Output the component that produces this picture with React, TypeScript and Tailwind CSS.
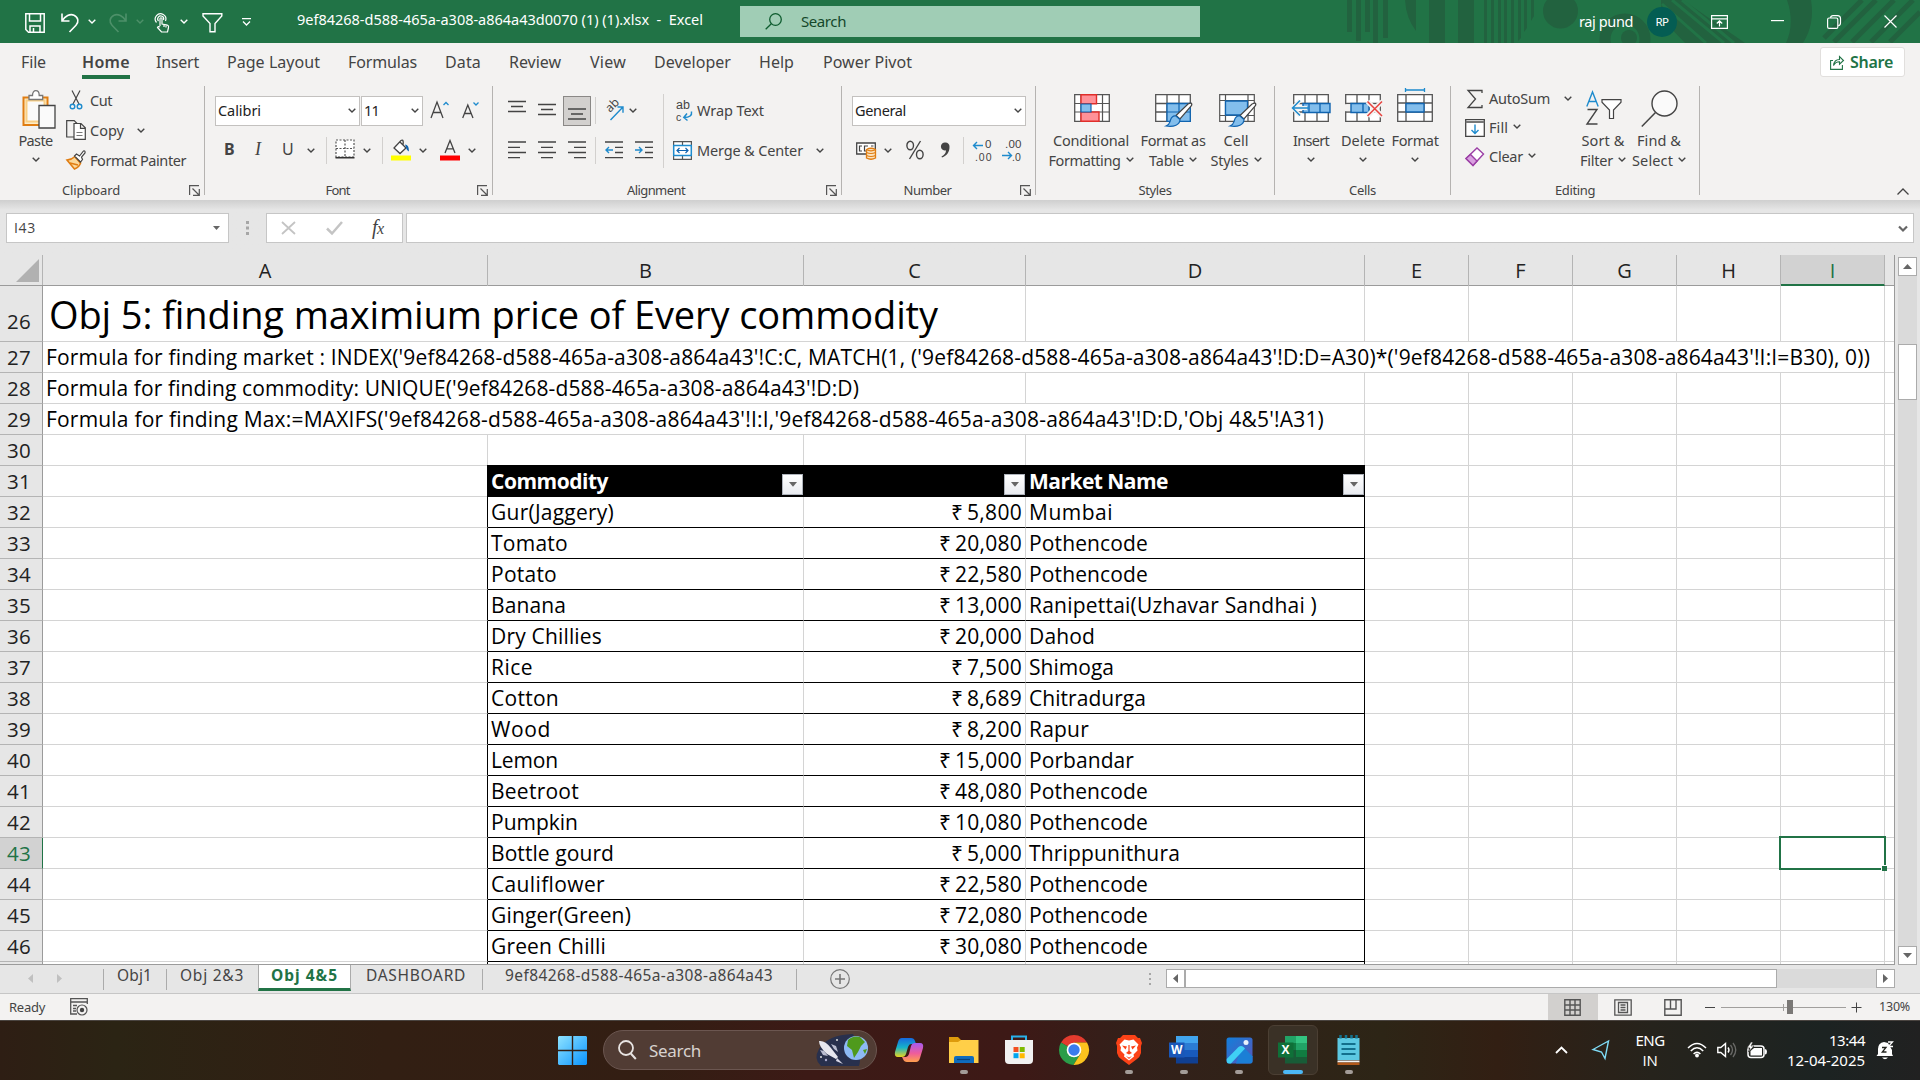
import React, { useLayoutEffect, useRef } from "react";

type Kids = { children?: React.ReactNode };

/** Single-line text whose tracking is adjusted so that it fills a given width. */
function T({ w, className = "", children }: { w: number; className?: string; children: string }) {
  const ref = useRef<HTMLSpanElement>(null);
  useLayoutEffect(() => {
    const el = ref.current;
    if (!el) return;
    el.style.letterSpacing = "0px";
    const natural = el.getBoundingClientRect().width;
    el.style.letterSpacing = `${(w - natural) / children.length}px`;
  }, [w, children]);
  return (
    <span className={`block shrink-0 whitespace-pre ${className}`} style={{ width: w }}>
      <span ref={ref} className="inline-block">
        {children}
      </span>
    </span>
  );
}

function Svg({ w, h, className = "", children }: { w: number; h: number; className?: string } & Kids) {
  return (
    <svg width={w} height={h} viewBox={`0 0 ${w} ${h}`} fill="none" className={`block shrink-0 overflow-visible ${className}`}>
      {children}
    </svg>
  );
}

const Chev = ({ className = "", color = "#444" }: { className?: string; color?: string }) => (
  <Svg w={8} h={5} className={className}>
    <path d="M0.7 0.7L4 4L7.3 0.7" stroke={color} strokeWidth="1.4" />
  </Svg>
);

const VSep = ({ className = "" }: { className?: string }) => (
  <span className={`block h-[27px] w-px shrink-0 bg-[#d2d0ce] ${className}`} />
);

/* ---------- Title bar ---------- */

function TitlePattern() {
  return (
    <svg className="absolute inset-y-0 left-[1340px]" width="580" height="43" viewBox="1340 0 580 43" fill="#22623f">
      <path d="M1347 0h5v32h-5zM1356 0h5v41h-5zM1365 0h5v32h-5zM1373 0h5v43h-5zM1383 0h5v38h-5zM1405 0h11v31Q1406 18 1405 0zM1429 0h16v43h-16zM1458 0h16v43h-16z" />
      <path d="M1484 0h3v43h-3zM1491 0h3v43h-3zM1498 0h3v43h-3zM1504 0h3v43h-3zM1511 0h3v43h-3zM1518 0h3v38l-3 3zM1524 0h3v28l-3 4zM1531 0h3v16l-3 5z" />
      <circle cx="1560.500" cy="11" r="17.500" />
      <circle cx="1625" cy="39" r="20" stroke="#22623f" strokeWidth="11" fill="none" />
      <circle cx="1629" cy="38" r="8" />
      <path d="M1661 0h22l62 43h-60L1661 18z" />
      <path d="M1672 0l52 43M1682 0l52 43M1662 4l44 39" stroke="#217346" strokeWidth="3" />
      <path d="M1787 0h24q4 24-8 43h-17q9-20 1-43z" />
      <path d="M1824 38l38-38M1834 42l42-42M1852 42l42-42M1871 42l42-42M1890 42l30-30" stroke="#22623f" strokeWidth="5" />
    </svg>
  );
}

function TitleBar() {
  return (
    <div className="relative flex h-[43px] items-center bg-[#217346] text-white">
      <TitlePattern />
      <Svg w={20} h={20} className="ml-[25px] mt-[3px]">
        <path d="M0.8 0.8h18.400v18.400H3.500L0.800 16.500zM4.500 1v7h11V1M5 19v-6h10v6M8.500 19v-4" stroke="#fff" strokeWidth="1.5" />
      </Svg>
      <Svg w={18} h={20} className="ml-4 mt-[3px]">
        <path d="M1 0.500v7.500h7.500M1.300 7.700C4 3 9 .5 13 2.200c4.500 2 5 7 2 10L8.500 19" stroke="#fff" strokeWidth="1.600" />
      </Svg>
      <Chev color="#fff" className="ml-[9px]" />
      <Svg w={18} h={20} className="ml-[13px] mt-[3px]">
        <path d="M17 0.500v7.500H9.500M16.700 7.700C14 3 9 .5 5 2.200c-4.500 2-5 7-2 10L9.500 19" stroke="#4d9069" strokeWidth="1.600" />
      </Svg>
      <Chev color="#4d9069" className="ml-[9px]" />
      <Svg w={16} h={20} className="ml-[10px] mt-[3px]">
        <path d="M2.500 9.500A5.300 5.300 0 1 1 11.500 8M4.500 8A3 3 0 1 1 9.500 7M6 13V5.500q1-1.500 2 0V11l5.500 1.200q1.500.5 1 2.300L13.500 19H7.500L3.500 14.500q.5-1.500 2.500-.5M10 11.500v2.500M12 12v2.500" stroke="#fff" strokeWidth="1.200" />
      </Svg>
      <Chev color="#fff" className="ml-[10px]" />
      <Svg w={21} h={20} className="ml-[14px] mt-[3px]">
        <path d="M1 0.800h18.800v2.200L13 10.500v8.300H8v-8.300L1 3z" stroke="#fff" strokeWidth="1.400" />
      </Svg>
      <Svg w={9} h={8} className="ml-[19px]">
        <path d="M0 .700h9M1 3.500L4.500 7L8 3.500" stroke="#fff" strokeWidth="1.300" />
      </Svg>
      <T w={406} className="ml-[46px] mt-[-4px] text-[14.500px]">
        9ef84268-d588-465a-a308-a864a43d0070 (1) (1).xlsx  -  Excel
      </T>
      <div className="ml-[37px] flex h-[31px] w-[460px] shrink-0 items-center bg-[#a0cdb5] text-[#14482a]">
        <Svg w={17} h={17} className="ml-[25px]">
          <circle cx="10.500" cy="6.500" r="5.800" stroke="#0e5c2f" strokeWidth="1.300" />
          <path d="M6.300 10.700L.7 16.300" stroke="#0e5c2f" strokeWidth="1.300" />
        </Svg>
        <T w={45} className="ml-[19px] text-[15px]">Search</T>
      </div>
      <T w={54} className="relative ml-[379px] text-[14.500px]">raj pund</T>
      <div className="relative ml-[14px] flex h-[30px] w-[30px] shrink-0 items-center justify-center rounded-full bg-[#045d53]">
        <T w={13} className="text-[11.500px]">RP</T>
      </div>
      <Svg w={17} h={14} className="relative ml-[34px]">
        <path d="M.6.600h15.800v12.800H.6zM.6 3.800h15.800M8.500 11.500V6M5.800 8.500L8.500 5.800L11.200 8.500" stroke="#fff" strokeWidth="1.200" />
      </Svg>
      <Svg w={13} h={2} className="relative ml-[43px] mt-[-1px]">
        <path d="M0 .6h13" stroke="#fff" strokeWidth="1.200" />
      </Svg>
      <Svg w={14} h={14} className="relative ml-[43px]">
        <path d="M3.500 2.800Q3.800.6 6 .6h4.500q3 0 3 3V8q0 2.400-2.300 2.600" stroke="#fff" strokeWidth="1.200" />
        <rect x=".6" y="3" width="10.200" height="10.400" rx="1.500" stroke="#fff" strokeWidth="1.200" />
      </Svg>
      <Svg w={13} h={13} className="relative ml-[43px]">
        <path d="M.5.500l12 12M12.500.500l-12 12" stroke="#fff" strokeWidth="1.200" />
      </Svg>
    </div>
  );
}

/* ---------- Ribbon tabs ---------- */

const TABS: [string, number, string][] = [
  ["File", 25, "ml-[21px]"],
  ["Home", 48, "ml-[36px]"],
  ["Insert", 43, "ml-[26px]"],
  ["Page Layout", 93, "ml-[28px]"],
  ["Formulas", 69, "ml-[28px]"],
  ["Data", 36, "ml-[28px]"],
  ["Review", 52, "ml-[28px]"],
  ["View", 36, "ml-[29px]"],
  ["Developer", 77, "ml-[28px]"],
  ["Help", 35, "ml-[28px]"],
  ["Power Pivot", 89, "ml-[29px]"],
];

function TabRow() {
  return (
    <div className="flex h-[42px] items-start text-[16px] leading-[38px] text-[#444]">
      {TABS.map(([name, w, ml]) => (
        <div key={name} className={`${ml} h-[36px] ${name === "Home" ? "border-b-4 border-[#217346] font-semibold" : ""}`}>
          <T w={w}>{name}</T>
        </div>
      ))}
      <div className="ml-auto mr-[15px] mt-1 flex h-[30px] w-[85px] items-center rounded-[3px] border border-[#e1dfdd] bg-white text-[#217346]">
        <Svg w={14} h={15} className="ml-[9px]">
          <path d="M3 5.500H.6v8.900h11.800V10M3.500 10.500C4 6.500 6 4.500 9.500 4.500V1.500L13.500 5.500L9.500 9.200V6.800C7 6.700 5 8 3.500 10.500z" stroke="#217346" strokeWidth="1.100" />
        </Svg>
        <T w={43} className="ml-[6px] text-[16px] font-semibold leading-none">Share</T>
      </div>
    </div>
  );
}

/* ---------- Ribbon ---------- */

function Group({ label, lw, w, launcher, children }: { label: string; lw: number; w: string; launcher?: boolean } & Kids) {
  return (
    <div className={`${w} flex shrink-0`}>
      <div className="flex flex-1 flex-col">
        <div className="flex h-[95px]">{children}</div>
        <div className="flex h-[20px] items-center">
          <div className="flex flex-1 justify-center text-[13px] leading-none text-[#444]">
            <T w={lw}>{label}</T>
          </div>
          {launcher && (
            <Svg w={11} h={11} className="ml-[7px] mr-1">
              <path d="M.6 10V.6H10M3.500 3.500l6 6M10.300 4v6.300H4" stroke="#555" strokeWidth="1.200" />
            </Svg>
          )}
        </div>
      </div>
      <div className="mt-px h-[109px] w-px bg-[#b5b3b1]" />
    </div>
  );
}

function Combo({ text, tw, w }: { text: string; tw: number; w: string }) {
  return (
    <div className={`${w} flex h-[30px] shrink-0 items-center justify-between border border-[#c3c1bf] bg-white pl-[2px] pr-[3px] text-[14.500px] leading-none text-[#222]`}>
      <T w={tw}>{text}</T>
      <Chev />
    </div>
  );
}

function Lines({ d, className = "", w = 18 }: { d: string; className?: string; w?: number }) {
  return (
    <Svg w={w} h={22} className={className}>
      <path d={d} stroke="#444" strokeWidth="1.300" />
    </Svg>
  );
}

function Big({ w, l1, w1, l2, w2, children }: { w: string; l1: string; w1: number; l2?: string; w2?: number } & Kids) {
  return (
    <div className={`${w} flex shrink-0 flex-col items-center text-[14.500px] leading-5 text-[#444]`}>
      <div className="flex h-[45px] items-start">{children}</div>
      <T w={w1}>{l1}</T>
      <div className="flex h-5 items-center gap-[5px]">
        {l2 && w2 && <T w={w2}>{l2}</T>}
        <Chev className="mt-[-2px]" />
      </div>
    </div>
  );
}

function Brush() {
  return (
    <>
      <path d="M36 10q1.500 1 .2 3L25 26l-4-3.500L33 11z" fill="#fff" stroke="#444" strokeWidth="1.200" />
      <path d="M21 23l4 3.500c0 5-6 8-14 6.500 4-1.500 3.500-3 4.500-6 1-3 3-4.500 5.500-4z" fill="#83beec" stroke="#1064b0" strokeWidth="1.200" />
    </>
  );
}

function Ribbon() {
  return (
    <div className="flex h-[115px]">
      <Group label="Clipboard" lw={58} w="w-[205px]" launcher>
        <div className="ml-[15px] flex w-[43px] flex-col items-center text-[14.500px] leading-5 text-[#444]">
          <Svg w={34} h={39} className="ml-[5px] mt-[5px]">
            <path d="M1.500 7.500h24V35h-24z" fill="#fcecc8" stroke="#e07d12" strokeWidth="2" />
            <path d="M4.500 10.500h18v21h-18z" fill="#fafafa" stroke="#f9cf85" strokeWidth="2" />
            <path d="M7 9.500V5.500h3.500C10.500 2 12 .7 13.800.7s3.400 1.300 3.400 4.800h3.500v4z" fill="#fff" stroke="#777" strokeWidth="1.300" />
            <path d="M17 15.500h16v22.500H17z" fill="#fafafa" stroke="#444" strokeWidth="1.300" />
          </Svg>
          <T w={34} className="ml-[-2px] mt-[1px]">Paste</T>
          <Chev className="ml-[-2px] mt-[7px]" />
        </div>
        <div className="ml-2 flex flex-col text-[14.500px] leading-none text-[#444]">
          <div className="flex h-[30px] items-center">
            <Svg w={20} h={20} className="ml-px">
              <path d="M5 .5l7 13.500M13 .5L6 14" stroke="#444" strokeWidth="1.200" />
              <circle cx="5.500" cy="16.500" r="2.300" stroke="#1e8bcd" strokeWidth="1.400" />
              <circle cx="12.500" cy="16.500" r="2.300" stroke="#1e8bcd" strokeWidth="1.400" />
            </Svg>
            <T w={22} className="ml-[3px]">Cut</T>
          </div>
          <div className="flex h-[30px] items-center">
            <Svg w={20} h={20}>
              <path d="M8 17H.7V.7h7.500L11 3.500" stroke="#444" strokeWidth="1.200" />
              <path d="M8 3.500h7l4.300 4.300v11.500H8zM14.500 3.800v4.500H19" fill="#fff" stroke="#444" strokeWidth="1.200" />
              <path d="M10.500 12.500h6M10.500 15.500h6" stroke="#777" />
            </Svg>
            <T w={34} className="ml-1">Copy</T>
            <Chev className="ml-[13px]" />
          </div>
          <div className="flex h-[30px] items-center">
            <Svg w={20} h={20}>
              <path d="M1 10q5-.5 8-3.500l5.500 6.500q-1 4-6 6z" fill="#fbd89a" stroke="#e07d12" strokeWidth="1.500" />
              <path d="M4 13l8 2M9 7l6 6.500" stroke="#e07d12" strokeWidth="1.300" />
              <path d="M8.500 6l2-2 3 2L17.500 1q2-.5 1.500 2l-3.500 4 1 2.500-2 2.500z" fill="#fff" stroke="#444" strokeWidth="1.200" />
            </Svg>
            <T w={96} className="ml-1">Format Painter</T>
          </div>
        </div>
      </Group>

      <Group label="Font" lw={24} w="w-[288px]" launcher>
        <div className="flex flex-col">
          <div className="flex h-[51px] items-center">
            <Combo text="Calibri" tw={43} w="ml-[10px] w-[145px]" />
            <Combo text="11" tw={15} w="ml-px w-[62px]" />
            <Svg w={20} h={22} className="ml-[7px]">
              <path d="M1 18L7 2L13 18M3.300 12.500h7.500" stroke="#444" strokeWidth="1.300" />
              <path d="M13.500 5L16 2.500L18.500 5" stroke="#1e8bcd" strokeWidth="1.300" />
            </Svg>
            <Svg w={18} h={22} className="ml-[12px]">
              <path d="M.7 18L5.800 5L11 18M2.600 13.500h6.500" stroke="#444" strokeWidth="1.300" />
              <path d="M11.500 2.500L14 5L16.500 2.500" stroke="#1e8bcd" strokeWidth="1.300" />
            </Svg>
          </div>
          <div className="flex h-[28px] items-center text-[16px] leading-none text-[#444]">
            <T w={10} className="ml-[19px] mt-[-2px] font-bold">B</T>
            <span className="ml-[21px] mt-[-2px] block w-2 font-['Liberation_Serif'] text-[18px] italic">I</span>
            <T w={12} className="ml-[19px] mt-[-2px] underline underline-offset-[3px]">U</T>
            <Chev className="ml-[13px] mt-[1px]" />
            <VSep className="ml-[11px]" />
            <Svg w={20} h={20} className="ml-2 mt-[-2px]">
              <path d="M1 1h18v17H1zM10 1v17M1 9.500h18" stroke="#555" strokeDasharray="2 1.500" strokeWidth="1.200" fill="#fff" />
              <path d="M.5 18.700h19" stroke="#333" strokeWidth="1.600" />
            </Svg>
            <Chev className="ml-2 mt-[1px]" />
            <VSep className="ml-[11px]" />
            <Svg w={20} h={22} className="ml-2">
              <path d="M9 3L15 9L9 14.500L3 9L10 1.500Q13 0 12 6" fill="#fff" stroke="#444" strokeWidth="1.300" />
              <path d="M14 5.500q4 0 4 7-2.500-1-3-4z" fill="#1064b0" />
              <path d="M0 16.500h20v5H0z" fill="#ff0" />
            </Svg>
            <Chev className="ml-2 mt-[1px]" />
            <Svg w={20} h={22} className="ml-[13px]">
              <path d="M5 14L10 1.500L15 14M6.800 9.800h6.500" stroke="#444" strokeWidth="1.300" />
              <path d="M0 16.500h20v5H0z" fill="#f00" />
            </Svg>
            <Chev className="ml-2 mt-[1px]" />
          </div>
        </div>
      </Group>

      <Group label="Alignment" lw={58} w="w-[349px]" launcher>
        <div className="flex w-[170px] shrink-0 flex-col">
          <div className="flex h-[51px] items-center">
            <Lines d="M0 1.500h18M3 6.500h12M0 11.500h18" className="ml-[15px]" />
            <Lines d="M0 4.500h18M3 9.500h12M0 14.500h18" className="ml-[12px]" />
            <div className="ml-[7px] flex h-[30px] w-7 items-center justify-center border border-[#8a8886] bg-[#d2d0ce]">
              <Lines d="M0 9h18M3 14h12M0 19h18" />
            </div>
            <VSep className="ml-1" />
            <Svg w={21} h={22} className="ml-2">
              <text x="0" y="0" transform="translate(6 13) rotate(-45)" fontFamily="Noto Sans" fontSize="12" fill="#444">ab</text>
              <path d="M6.500 20L18.500 7.500M13.500 7h5.500v5.800" stroke="#1e8bcd" strokeWidth="1.400" />
            </Svg>
            <Chev className="ml-1" />
          </div>
          <div className="flex h-[28px] items-center">
            <Lines d="M0 3h18M0 8.300h12M0 13.500h18M0 18.700h12" className="ml-[15px]" />
            <Lines d="M0 3h18M3 8.300h12M0 13.500h18M3 18.700h12" className="ml-[12px]" />
            <Lines d="M0 3h18M6 8.300h12M0 13.500h18M6 18.700h12" className="ml-[12px]" />
            <VSep className="ml-[9px]" />
            <Svg w={18} h={22} className="ml-[9px]">
              <path d="M0 3h18M10 8.300h8M10 13.500h8M0 18.700h18" stroke="#444" strokeWidth="1.300" />
              <path d="M8 11H1M4 8L1 11L4 14" stroke="#1e8bcd" strokeWidth="1.400" />
            </Svg>
            <Svg w={18} h={22} className="ml-[12px]">
              <path d="M0 3h18M10 8.300h8M10 13.500h8M0 18.700h18" stroke="#444" strokeWidth="1.300" />
              <path d="M0 11h7M4 8L7 11L4 14" stroke="#1e8bcd" strokeWidth="1.400" />
            </Svg>
          </div>
        </div>
        <div className="mt-[9px] h-[74px] w-px bg-[#d2d0ce]" />
        <div className="flex flex-col text-[14.500px] leading-none text-[#444]">
          <div className="flex h-[51px] items-center">
            <Svg w={18} h={24} className="ml-[11px]">
              <text x="1" y="10" fontFamily="Liberation Sans" fontSize="12.500" fill="#444">ab</text>
              <text x="1" y="22" fontFamily="Liberation Sans" fontSize="10.500" fill="#444">c</text>
              <path d="M16.500 12.500q1 6-7.500 6M12 14.500L8.800 18.500L12.500 21.500" stroke="#1e8bcd" strokeWidth="1.500" />
            </Svg>
            <T w={67} className="ml-1">Wrap Text</T>
          </div>
          <div className="flex h-[28px] items-center">
            <Svg w={19} h={19} className="ml-[9px]">
              <path d="M.6.600h17.800v17.800H.6zM9.500 1v4M9.500 14v4" stroke="#555" strokeWidth="1.200" fill="#fff" />
              <path d="M.7 4.600h17.600v9.800H.7z" fill="#fff" stroke="#1e8bcd" strokeWidth="1.500" />
              <path d="M4 9.500h11M6.500 7L4 9.500L6.500 12M12.500 7L15 9.500L12.500 12" stroke="#1064b0" strokeWidth="1.200" />
            </Svg>
            <T w={106} className="ml-[5px]">{"Merge & Center"}</T>
            <Chev className="ml-[13px]" />
          </div>
        </div>
      </Group>

      <Group label="Number" lw={48} w="w-[194px]" launcher>
        <div className="flex flex-col">
          <div className="flex h-[51px] items-center">
            <Combo text="General" tw={51} w="ml-[10px] w-[174px]" />
          </div>
          <div className="flex h-[28px] items-center text-[#444]">
            <Svg w={20} h={20} className="ml-[14px]">
              <path d="M.7 3h18.600v11H.7z" stroke="#444" strokeWidth="1.300" fill="#fff" />
              <path d="M6 6H3.500v5H6M12 11H8.500V6H12M15 6h2.500" stroke="#444" strokeWidth="1.200" />
              <path d="M10.500 9.500q4.500-2.500 9 0v8.500q-4.500 2.500-9 0z" fill="#fbe3bf" stroke="#e07d12" strokeWidth="1.300" />
              <path d="M10.500 12.500q4.500 2 9 0M10.500 15.500q4.500 2 9 0M10.500 9.800q4.500 2 9 0" stroke="#e07d12" strokeWidth="1.200" />
            </Svg>
            <Chev className="ml-2 mt-[1px]" />
            <Svg w={18} h={20} className="ml-[14px]">
              <ellipse cx="4.200" cy="5.500" rx="3.300" ry="4.200" stroke="#444" strokeWidth="1.400" />
              <ellipse cx="13.800" cy="14.500" rx="3.300" ry="4.200" stroke="#444" strokeWidth="1.400" />
              <path d="M14.500 1L3.500 19" stroke="#444" strokeWidth="1.400" />
            </Svg>
            <Svg w={11} h={20} className="ml-4">
              <path d="M5.500 2.500a4 4 0 0 1 4 4.200C9.500 12 7 15.500 2 17.500l-.5-1C4.500 15 6 13 6 10.300A4 4 0 1 1 5.500 2.500z" fill="#444" />
            </Svg>
            <VSep className="ml-[12px]" />
            <Svg w={20} h={22} className="ml-2">
              <path d="M11 6.500H1.500M5 3L1.500 6.500L5 10" stroke="#1e8bcd" strokeWidth="1.400" />
              <text x="13" y="9" fontFamily="Liberation Sans" fontSize="11.500" fill="#444">0</text>
              <text x="3" y="21.500" fontFamily="Liberation Sans" fontSize="10.500" fill="#444" textLength="16.500">.00</text>
            </Svg>
            <Svg w={20} h={22} className="ml-[10px]">
              <path d="M0 16.500h9.500M6 13L9.500 16.500L6 20" stroke="#1e8bcd" strokeWidth="1.400" />
              <text x="3" y="9" fontFamily="Liberation Sans" fontSize="11.500" fill="#444" textLength="16.500">.00</text>
              <text x="10" y="21.500" fontFamily="Liberation Sans" fontSize="10.500" fill="#444">.0</text>
            </Svg>
          </div>
        </div>
      </Group>

      <Group label="Styles" lw={33} w="w-[239px]">
        <div className="w-[10px]" />
        <Big w="w-[90px]" l1="Conditional" w1={76} l2="Formatting" w2={72}>
          <Svg w={36} h={28} className="ml-px mt-[9px]">
            <path d="M.7.700h34.600v26.600H.7z" fill="#fff" stroke="#555" strokeWidth="1.300" />
            <path d="M.7 9.500h34.600M.7 18h34.600M7 1v26M28.500 1v26" stroke="#555" strokeWidth="1.200" />
            <path d="M7 .700h15.500v9H7zM7 18h18v9.300H7z" fill="#ff9198" stroke="#e02e2a" strokeWidth="1.400" />
            <path d="M7 10h10v8H7z" fill="#83beec" stroke="#1064b0" strokeWidth="1.200" />
          </Svg>
        </Big>
        <Big w="w-[74px]" l1="Format as" w1={65} l2="Table" w2={35}>
          <Svg w={38} h={36} className="ml-0.5 mt-[8px]">
            <path d="M.7 1.700h34.600v26.600H.7zM.7 10.500h34.600M.7 19h34.600M12 2v26M24 2v26" fill="#fff" stroke="#555" strokeWidth="1.300" />
            <path d="M12 10.500h23.300v17.800H12z" fill="#83beec" stroke="#1064b0" strokeWidth="1.300" />
            <path d="M12 19h23M24 10.500v18" stroke="#1064b0" strokeWidth="1.200" />
            <Brush />
          </Svg>
        </Big>
        <Big w="w-[52px]" l1="Cell" w1={25} l2="Styles" w2={38}>
          <Svg w={38} h={36} className="ml-[3px] mt-[8px]">
            <path d="M.7 1.700h34.600v26.600H.7zM.7 7.500h34.600M.7 22.500h34.600M6.500 2v26M29 2v26" fill="#fff" stroke="#555" strokeWidth="1.200" />
            <path d="M6.500 8h22v14h-22z" fill="#83beec" stroke="#1064b0" strokeWidth="1.300" />
            <Brush />
          </Svg>
        </Big>
      </Group>

      <Group label="Cells" lw={27} w="w-[176px]">
        <div className="w-[10px]" />
        <Big w="w-[52px]" l1="Insert" w1={36}>
          <Svg w={40} h={30} className="mt-[8px]">
            <path d="M2.700 1.700h34.600v26.600H2.700zM2.700 10.500h34.600M2.700 19h34.600M14 2v26M26 2v26" fill="#fff" stroke="#555" strokeWidth="1.300" />
            <path d="M12 10.500h27v9H12z" fill="#83beec" stroke="#1064b0" strokeWidth="1.400" />
            <path d="M18 10.500v9M29 10.500v9" stroke="#1064b0" strokeWidth="1.300" />
            <path d="M16 15H1.500M9 7.500L1.500 15L9 22.500" stroke="#f3f2f1" strokeWidth="4" />
            <path d="M18 15H1.500M9 7.500L1.500 15L9 22.500" stroke="#1e8bcd" strokeWidth="1.500" />
          </Svg>
        </Big>
        <Big w="w-[52px]" l1="Delete" w1={44}>
          <Svg w={38} h={30} className="ml-0.5 mt-[8px]">
            <path d="M.7 1.700h34.600v26.600H.7zM.7 10.500h34.600M.7 19h34.600M12 2v26M24 2v26" fill="#fff" stroke="#555" strokeWidth="1.300" />
            <path d="M0 11.200h6v7H0z" fill="#f3f2f1" />
            <path d="M6 10.500h18v9H6zM18 10.500v9" fill="#83beec" stroke="#1064b0" strokeWidth="1.400" />
            <path d="M22.500 8.500L37 23M37 8.500L22.500 23" stroke="#f3f2f1" strokeWidth="5" />
            <path d="M22.500 8.500L37 23M37 8.500L22.500 23" stroke="#e8423e" strokeWidth="1.500" />
          </Svg>
        </Big>
        <Big w="w-[52px]" l1="Format" w1={47}>
          <Svg w={36} h={36} className="mt-[2px]">
            <path d="M.7 7.700h34.600v26.600H.7zM.7 16h34.600M.7 25h34.600M9 8v26M27 8v26" fill="#fff" stroke="#555" strokeWidth="1.300" />
            <path d="M9 16.500h18v8.500H9z" fill="#83beec" stroke="#1064b0" strokeWidth="1.300" />
            <path d="M8.500 3h19M8.500 1v4M27.500 1v4" stroke="#1e8bcd" strokeWidth="1.300" />
          </Svg>
        </Big>
      </Group>

      <Group label="Editing" lw={40} w="w-[249px]">
        <div className="ml-[14px] mt-[-1px] flex w-[111px] shrink-0 flex-col text-[14.500px] leading-none text-[#444]">
          <div className="flex h-[29px] items-center">
            <Svg w={20} h={20}>
              <path d="M17 4V1.500H3L10.500 10L3 18.500H17V16" stroke="#444" strokeWidth="1.300" />
            </Svg>
            <T w={61} className="ml-1">AutoSum</T>
            <Chev className="ml-[14px]" />
          </div>
          <div className="flex h-[29px] items-center">
            <Svg w={20} h={18}>
              <path d="M.7.700h18.600v16.600H.7z" fill="#fff" stroke="#444" strokeWidth="1.300" />
              <path d="M.7 3h18.600" stroke="#777" strokeWidth="2" />
              <path d="M10 5.500v9M6.500 11L10 14.500L13.500 11" stroke="#1e8bcd" strokeWidth="1.400" />
            </Svg>
            <T w={19} className="ml-1">Fill</T>
            <Chev className="ml-[5px] mt-[-2px]" />
          </div>
          <div className="flex h-[29px] items-center">
            <Svg w={20} h={20}>
              <path d="M1 11.500L12 1l6.500 6L8 18.500z" fill="#fff" stroke="#9b3fa5" strokeWidth="1.400" />
              <path d="M1 11.500L5.500 7.500L12 14L8 18.500z" fill="#d9a0e0" stroke="#9b3fa5" strokeWidth="1.400" />
            </Svg>
            <T w={34} className="ml-1">Clear</T>
            <Chev className="ml-[5px] mt-[-2px]" />
          </div>
        </div>
        <Big w="w-[54px]" l1="Sort &" w1={43} l2="Filter" w2={33}>
          <Svg w={36} h={36} className="ml-0.5 mt-[5px]">
            <path d="M.8 16.500L6.500 2L12.200 16.500M2.700 11.500h7.600" stroke="#1e8bcd" strokeWidth="1.400" />
            <path d="M1.500 19.500h9.500L1 34h10.500" stroke="#444" strokeWidth="1.400" />
            <path d="M16 9.700h19v2.500L27.500 20v8.500h-4V20L16 12.200z" fill="#fff" stroke="#444" strokeWidth="1.200" />
          </Svg>
        </Big>
        <Big w="w-[58px]" l1="Find &" w1={44} l2="Select" w2={41}>
          <Svg w={37} h={38} className="mt-[5px]">
            <circle cx="23.500" cy="13.500" r="12.500" fill="#fafafa" stroke="#444" strokeWidth="1.400" />
            <path d="M14.500 22.500L.8 36.500" stroke="#444" strokeWidth="1.500" />
          </Svg>
        </Big>
      </Group>
      <Svg w={12} h={7} className="mb-[5px] ml-auto mr-[11px] self-end">
        <path d="M.5 6.500L6 1L11.500 6.500" stroke="#444" strokeWidth="1.300" />
      </Svg>
    </div>
  );
}

/* ---------- Formula bar ---------- */

function FormulaBar() {
  return (
    <div className="flex h-[55px] items-start bg-[#e6e6e6] bg-linear-to-b from-[#cfcfcf] to-[#e6e6e6] to-[10px] pt-[13px]">
      <div className="ml-[6px] flex h-[30px] w-[223px] shrink-0 items-center justify-between border border-[#c6c6c6] bg-white pl-[7px] pr-2 text-[14px] leading-none text-[#444]">
        <T w={22} className="font-['Open_Sans']">I43</T>
        <Svg w={7} h={4}><path d="M0 0h7L3.500 4z" fill="#666" /></Svg>
      </div>
      <Svg w={3} h={14} className="ml-[17px] mt-2">
        <path d="M0 0h3v3H0zM0 5.500h3v3H0zM0 11h3v3H0z" fill="#a6a6a6" />
      </Svg>
      <div className="ml-[17px] flex h-[30px] w-[137px] shrink-0 items-center border border-[#c6c6c6] bg-white">
        <Svg w={15} h={14} className="ml-[14px]">
          <path d="M1 1l13 12M14 1L1 13" stroke="#c4c4c4" strokeWidth="1.800" />
        </Svg>
        <Svg w={17} h={14} className="ml-[30px]">
          <path d="M1 7.500L6 12.500L16 1" stroke="#c4c4c4" strokeWidth="2.500" />
        </Svg>
        <span className="ml-[29px] mt-[-3px] font-['Liberation_Serif'] text-[20px] italic leading-none tracking-[-0.500px] text-[#444]">
          f<span className="text-[16px]">x</span>
        </span>
      </div>
      <div className="ml-[3px] mr-[6px] flex h-[30px] flex-1 items-center justify-end border border-[#c6c6c6] bg-white pr-[5px]">
        <Svg w={10} h={7}><path d="M1 1.500l4 4 4-4" stroke="#666" strokeWidth="2.200" /></Svg>
      </div>
    </div>
  );
}

/* ---------- Sheet ---------- */

const COLS: [string, string][] = [
  ["A", "w-[445px]"], ["B", "w-[316px]"], ["C", "w-[222px]"], ["D", "w-[339px]"],
  ["E", "w-[104px]"], ["F", "w-[104px]"], ["G", "w-[104px]"], ["H", "w-[104px]"], ["I", "w-[104px]"],
];

type Cell = [string, number];
const DATA: [Cell, string, Cell][] = [
  [["Gur(Jaggery)", 123], "₹ 5,800", ["Mumbai", 84]],
  [["Tomato", 77], "₹ 20,080", ["Pothencode", 119]],
  [["Potato", 66], "₹ 22,580", ["Pothencode", 119]],
  [["Banana", 75], "₹ 13,000", ["Ranipettai(Uzhavar Sandhai )", 288]],
  [["Dry Chillies", 111], "₹ 20,000", ["Dahod", 66]],
  [["Rice", 42], "₹ 7,500", ["Shimoga", 85]],
  [["Cotton", 68], "₹ 8,689", ["Chitradurga", 117]],
  [["Wood", 60], "₹ 8,200", ["Rapur", 60]],
  [["Lemon", 67], "₹ 15,000", ["Porbandar", 105]],
  [["Beetroot", 88], "₹ 48,080", ["Pothencode", 119]],
  [["Pumpkin", 87], "₹ 10,080", ["Pothencode", 119]],
  [["Bottle gourd", 123], "₹ 5,000", ["Thrippunithura", 151]],
  [["Cauliflower", 114], "₹ 22,580", ["Pothencode", 119]],
  [["Ginger(Green)", 140], "₹ 72,080", ["Pothencode", 119]],
  [["Green Chilli", 115], "₹ 30,080", ["Pothencode", 119]],
];

const G = "border-r border-[#d4d4d4]";

function RowHead({ n, tall }: { n: number; tall?: boolean }) {
  const on = n === 43;
  return (
    <div
      className={`${tall ? "h-[56px] pt-[20px]" : "h-[31px]"} flex w-[43px] shrink-0 justify-center border-b border-r pr-1 text-[20.500px] leading-[31px] ${
        on ? "border-b-[#b4b4b4] border-r-[#217346] bg-[#d2d2d2] text-[#217346]" : "border-b-[#b4b4b4] border-r-[#9b9b9b] bg-[#e6e6e6] text-[#222]"
      }`}
    >
      <T w={24}>{String(n)}</T>
    </div>
  );
}

function Tail() {
  return (
    <>
      {COLS.slice(4).map(([c]) => (
        <div key={c} className={`w-[104px] shrink-0 border-b ${G}`} />
      ))}
      <div className="flex-1 border-b border-[#d4d4d4]" />
    </>
  );
}

function Filter() {
  return (
    <span className="mt-[9px] flex h-[21px] w-[21px] shrink-0 items-center justify-center border border-[#aeb3bb] bg-linear-to-b from-white to-[#e9ebf0]">
      <Svg w={8} h={5}><path d="M0 0h8L4 4.800z" fill="#666" /></Svg>
    </span>
  );
}

function TextRow({ n, text, tw, before, rest }: { n: number; text: string; tw: number; before: string; rest: string[] }) {
  return (
    <div className="flex h-[31px]">
      <RowHead n={n} />
      <div className={`${before} shrink-0 border-b pl-[3px] ${G}`}>
        <T w={tw}>{text}</T>
      </div>
      {rest.map((w, i) => (
        <div key={i} className={`${w} shrink-0 border-b ${G}`} />
      ))}
      <div className="flex-1 border-b border-[#d4d4d4]" />
    </div>
  );
}

function Sheet() {
  return (
    <div className="relative h-[710px] w-[1895px] shrink-0 overflow-hidden border-b border-r border-[#9b9b9b] bg-white font-['Open_Sans',sans-serif] text-[21px] leading-[30px] text-black">
      <div className="flex h-[31px] border-b border-[#9b9b9b] bg-[#e6e6e6] text-[20px] leading-[32px] text-[#222]">
        <div className="flex w-[43px] shrink-0 items-end justify-end border-r border-[#b4b4b4] pb-[3px] pr-[3px]">
          <Svg w={23} h={23}><path d="M23 0v23H0z" fill="#b1b1b1" /></Svg>
        </div>
        {COLS.map(([c, w]) => (
          <div
            key={c}
            className={`${w} h-[31px] shrink-0 border-r border-[#b4b4b4] text-center ${c === "I" ? "border-b-2 border-b-[#217346] bg-[#d2d2d2] text-[#217346]" : ""}`}
          >
            {c}
          </div>
        ))}
      </div>

      <div className="flex h-[56px]">
        <RowHead n={26} tall />
        <div className={`w-[983px] shrink-0 border-b pl-[6px] text-[38px] leading-[56px] ${G}`}>
          <T w={889}>Obj 5: finding maximium price of Every commodity</T>
        </div>
        <div className={`w-[339px] shrink-0 border-b ${G}`} />
        <Tail />
      </div>
      <TextRow
        n={27}
        tw={1824}
        before="w-[1842px]"
        rest={[]}
        text="Formula for finding market : INDEX('9ef84268-d588-465a-a308-a864a43'!C:C, MATCH(1, ('9ef84268-d588-465a-a308-a864a43'!D:D=A30)*('9ef84268-d588-465a-a308-a864a43'!I:I=B30), 0))"
      />
      <TextRow
        n={28}
        tw={813}
        before="w-[983px]"
        rest={["w-[339px]", "w-[104px]", "w-[104px]", "w-[104px]", "w-[104px]", "w-[104px]"]}
        text="Formula for finding commodity: UNIQUE('9ef84268-d588-465a-a308-a864a43'!D:D)"
      />
      <TextRow
        n={29}
        tw={1278}
        before="w-[1322px]"
        rest={["w-[104px]", "w-[104px]", "w-[104px]", "w-[104px]", "w-[104px]"]}
        text="Formula for finding Max:=MAXIFS('9ef84268-d588-465a-a308-a864a43'!I:I,'9ef84268-d588-465a-a308-a864a43'!D:D,'Obj 4&5'!A31)"
      />
      <div className="flex h-[31px]">
        <RowHead n={30} />
        {COLS.slice(0, 4).map(([c, w]) => (
          <div key={c} className={`${w} shrink-0 border-b ${G}`} />
        ))}
        <Tail />
      </div>
      <div className="flex h-[31px]">
        <RowHead n={31} />
        <div className="w-[444px] shrink-0 border-b border-[#d4d4d4]" />
        <div className="mt-[-1px] flex w-[878px] shrink-0 bg-black font-bold leading-[32px] text-white">
          <div className="flex w-[316px] justify-between pl-1">
            <T w={117}>Commodity</T>
            <Filter />
          </div>
          <div className="flex w-[222px] justify-end"><Filter /></div>
          <div className="flex w-[339px] justify-between pl-1">
            <T w={139}>Market Name</T>
            <Filter />
          </div>
        </div>
        <Tail />
      </div>
      {DATA.map(([a, price, m], i) => (
        <div key={i} className="flex h-[31px]">
          <RowHead n={32 + i} />
          <div className="w-[445px] shrink-0 border-b border-r border-b-[#d4d4d4] border-r-black" />
          <div className="w-[316px] shrink-0 border-b border-r border-b-black border-r-[#d4d4d4] pl-[3px]">
            <T w={a[1]}>{a[0]}</T>
          </div>
          <div className="flex w-[222px] shrink-0 justify-end border-b border-r border-b-black border-r-[#d4d4d4] pr-[3px]">
            <T w={price.length === 7 ? 71 : 83} className="[word-spacing:-2px]">{price}</T>
          </div>
          <div className="w-[339px] shrink-0 border-b border-r border-black pl-[3px]">
            <T w={m[1]}>{m[0]}</T>
          </div>
          <Tail />
        </div>
      ))}
      <div className="flex h-[3px]">
        <div className="w-[43px] shrink-0 border-r border-[#9b9b9b] bg-[#e6e6e6]" />
        <div className="w-[445px] shrink-0 border-r border-black" />
        <div className={`w-[316px] shrink-0 ${G}`} />
        <div className={`w-[222px] shrink-0 ${G}`} />
        <div className="w-[339px] shrink-0 border-r border-black" />
        {COLS.slice(4).map(([c]) => (
          <div key={c} className={`w-[104px] shrink-0 ${G}`} />
        ))}
      </div>

      <div className="absolute left-[1779px] top-[581px] h-[34px] w-[107px] border-2 border-[#217346]">
        <span className="absolute -bottom-[3px] -right-[3px] block h-[6px] w-[6px] border-l border-t border-white bg-[#217346]" />
      </div>
    </div>
  );
}

function ScrollBtn({ d }: { d: string }) {
  return (
    <div className="flex h-[19px] w-[19px] shrink-0 items-center justify-center border border-[#ababab] bg-white">
      <Svg w={9} h={9}><path d={d} fill="#666" /></Svg>
    </div>
  );
}

/* ---------- Sheet tabs and status ---------- */

function SheetTabs() {
  return (
    <div className="flex h-[29px] items-start border-b border-[#c6c6c6] bg-[#e6e6e6] text-[15.500px] leading-[20px] text-[#444]">
      <Svg w={5} h={9} className="ml-[28px] mt-[9px]"><path d="M5 0v9L0 4.500z" fill="#c0c0c0" /></Svg>
      <Svg w={5} h={9} className="ml-[24px] mt-[9px]"><path d="M0 0v9l5-4.500z" fill="#c0c0c0" /></Svg>
      <span className="ml-[41px] mt-1 block h-[21px] w-px bg-[#ababab]" />
      <T w={35} className="ml-[13px]">Obj1</T>
      <span className="ml-[14px] mt-1 block h-[21px] w-px bg-[#ababab]" />
      <T w={64} className="ml-[13px]">Obj 2&3</T>
      <div className="ml-[14px] flex h-[26px] w-[93px] shrink-0 justify-center border-x border-b-[3px] border-x-[#ababab] border-b-[#217346] bg-white font-bold text-[#217346]">
        <T w={67}>Obj 4&5</T>
      </div>
      <T w={100} className="ml-[15px]">DASHBOARD</T>
      <span className="ml-[16px] mt-1 block h-[21px] w-px bg-[#ababab]" />
      <T w={268} className="ml-[22px]">9ef84268-d588-465a-a308-a864a43</T>
      <span className="ml-[23px] mt-1 block h-[21px] w-px bg-[#ababab]" />
      <Svg w={20} h={20} className="ml-[33px] mt-1">
        <circle cx="10" cy="10" r="9.300" stroke="#777" strokeWidth="1.200" />
        <path d="M10 5v10M5 10h10" stroke="#777" strokeWidth="1.600" />
      </Svg>
      <Svg w={3} h={13} className="ml-[299px] mt-2">
        <path d="M0 0h2v2H0zM0 5h2v2H0zM0 10h2v2H0z" fill="#a6a6a6" />
      </Svg>
      <div className="ml-[14px] mt-1 flex w-[729px] shrink-0 bg-[#dadada]">
        <ScrollBtn d="M7 0v9L2 4.500z" />
        <div className="h-[19px] w-[592px] border border-[#ababab] bg-white" />
        <div className="ml-auto"><ScrollBtn d="M2 0v9l5-4.500z" /></div>
      </div>
    </div>
  );
}

function StatusBar() {
  return (
    <div className="flex h-[26px] items-center bg-[#f3f2f1] text-[13px] leading-none text-[#444]">
      <T w={36} className="ml-[9px]">Ready</T>
      <Svg w={18} h={18} className="ml-[25px]">
        <path d="M7 16H.7V.7h16.600V6M.7 4h16.600M3 7.500h4M3 10.500h3M3 13h3" stroke="#555" strokeWidth="1.300" />
        <circle cx="12" cy="12" r="5" fill="#f3f2f1" stroke="#555" strokeWidth="1.200" />
        <circle cx="12" cy="12" r="2.200" fill="#444" />
      </Svg>
      <div className="ml-auto flex h-full w-[50px] items-center justify-center bg-[#d2d0ce] pr-px">
        <Svg w={17} h={17}>
          <path d="M.8.800h15.400v15.400H.8zM.8 6h15.400M.8 11h15.400M6 1v15M11 1v15" stroke="#555" strokeWidth="1.400" />
        </Svg>
      </div>
      <Svg w={18} h={17} className="ml-4">
        <path d="M.8.800h16.400v15.400H.8zM4.500 3.500h9v10h-9zM6.500 6h5M6.500 8.500h5M6.500 11h5" stroke="#555" strokeWidth="1.300" />
      </Svg>
      <Svg w={18} h={17} className="ml-8">
        <path d="M.8.800h16.400v15.400H.8zM1 10h11V1M6.500 1v9" stroke="#555" strokeWidth="1.400" />
      </Svg>
      <span className="ml-[23px] block h-px w-[10px] bg-[#444]" />
      <Svg w={125} h={14} className="ml-[6px]">
        <path d="M0 7.500h125M62.500 4v7" stroke="#a19f9d" />
        <path d="M66 0h6v14h-6z" fill="#7a7876" />
      </Svg>
      <Svg w={11} h={11} className="ml-[5px]"><path d="M5.500.500v10M.5 5.500h10" stroke="#444" /></Svg>
      <T w={31} className="ml-[17px] mr-[10px] text-[12.500px]">130%</T>
    </div>
  );
}

/* ---------- Taskbar ---------- */

function TaskApp({ children, dot, ml = "" }: { dot?: boolean; ml?: string } & Kids) {
  return (
    <div className={`${ml} flex w-[55px] shrink-0 flex-col items-center`}>
      <div className="flex h-[45px] items-end justify-center">
        <div className="flex h-[32px] items-center">{children}</div>
      </div>
      {dot && <span className="mt-[4px] block h-1 w-2 rounded-full bg-[#a39c98]" />}
    </div>
  );
}

function Taskbar() {
  return (
    <div className="flex h-[60px] items-start border-t border-[#4a4440] bg-[linear-gradient(90deg,#2e1e14_0%,#2b2414_6%,#321f13_20%,#331e13_34%,#3c1a16_42%,#3d1916_53%,#33201a_59%,#2d2516_72%,#321f13_78%,#26231c_86%,#1c2322_95%,#212121_100%)] text-white">
      <Svg w={29} h={29} className="ml-[558px] mt-[15px]">
        <defs>
          <linearGradient id="win" x1="0" y1="0" x2="1" y2="1">
            <stop offset="0" stopColor="#8fe3ff" /><stop offset="1" stopColor="#0a94ff" />
          </linearGradient>
        </defs>
        <path d="M1 0h12.800v13.800H0V1zM15.200 0H28l1 1v12.800H15.200zM0 15.200h13.800V29H1l-1-1zM15.200 15.200H29V28l-1 1H15.200z" fill="url(#win)" />
      </Svg>
      <div className="ml-[16px] mt-[9px] flex h-10 w-[274px] shrink-0 items-center rounded-full border border-[#6b5650] bg-[#513c34]">
        <Svg w={19} h={20} className="ml-[14px]">
          <circle cx="8" cy="8" r="7" stroke="#e8e4e2" strokeWidth="1.800" />
          <path d="M12.800 13.500l5 5.500" stroke="#e8e4e2" strokeWidth="2" />
        </Svg>
        <T w={52} className="ml-[12px] mt-px text-[17px] text-[#d8d2cf]">Search</T>
        <Svg w={58} h={34} className="ml-auto mr-[5px]">
          <path d="M8 33Q0 26 6 16Q14 2 40 1Q50 20 46 33z" fill="#1b2c55" opacity=".75" />
          <path d="M6 8q6-1 12 7l7 9-2 2-9-5Q6 14 6 8z" fill="#e6e6ee" />
          <path d="M7 17l4 1 4 5-5-1zM18 11l5 2 2 6-4-3z" fill="#b9bcd0" />
          <path d="M24 25l6 6-7-3z" fill="#d8d8e8" />
          <circle cx="43" cy="15" r="12" fill="#8dbaf4" />
          <path d="M35 7q5-5 12-3l5 5-4 4-3 6-4 6-2-8-5-4z" fill="#4f9a1c" />
          <path d="M50 17l4-1-2 5z" fill="#4f9a1c" />
          <circle cx="8" cy="24" r="1" fill="#ddd" /><circle cx="13" cy="27" r="1.200" fill="#aac" /><circle cx="24" cy="7" r="1" fill="#ddd" />
        </Svg>
      </div>

      <TaskApp ml="ml-[4px]">
        <Svg w={28} h={26}>
          <defs>
            <linearGradient id="cp1" x1="0" y1="0" x2="0" y2="1">
              <stop offset="0" stopColor="#1668e0" /><stop offset=".5" stopColor="#16b3c9" /><stop offset="1" stopColor="#e9d51d" />
            </linearGradient>
            <linearGradient id="cp2" x1="0" y1="0" x2="0" y2="1">
              <stop offset="0" stopColor="#a65af0" /><stop offset=".55" stopColor="#ef5d9a" /><stop offset="1" stopColor="#ffa04c" />
            </linearGradient>
          </defs>
          <path d="M7 1h9q3 0 4 3l1 3h-5q-2 0-3 3l-2 7q-1 3-4 3H3q-4 0-3-5L3 5q1-4 4-4z" fill="url(#cp1)" />
          <path d="M21 25h-9q-3 0-4-3l-1-2h4q2 0 3-3l2-8q1-3 4-3h5q4 0 3 5l-3 10q-1 4-4 4z" fill="url(#cp2)" />
        </Svg>
      </TaskApp>
      <TaskApp dot>
        <Svg w={31} h={28}>
          <path d="M1 1h9l3 3h17v8H1z" fill="#dd9b0c" />
          <path d="M1 6h9l3-2h17.500v23H1z" fill="#ffcf48" />
          <path d="M6 27v-5q0-2 2-2h16q2 0 2 2v5z" fill="#0f6cbd" />
          <path d="M9 23.500h13" stroke="#07427c" strokeWidth="1.200" />
        </Svg>
      </TaskApp>
      <TaskApp>
        <Svg w={30} h={30}>
          <path d="M8 6V1.500h14V6" stroke="#29b1ea" strokeWidth="2" />
          <path d="M1 5h28v20q0 4-4 4H5q-4 0-4-4z" fill="#f1f1f1" />
          <path d="M9.500 12h5v5h-5z" fill="#f25022" /><path d="M15.700 12h5v5h-5z" fill="#7fba00" />
          <path d="M9.500 18.200h5v5h-5z" fill="#00a4ef" /><path d="M15.700 18.200h5v5h-5z" fill="#ffb900" />
        </Svg>
      </TaskApp>
      <TaskApp>
        <Svg w={30} h={30}>
          <path d="M15 15L2 7.500A15 15 0 0 1 28 7.500H15z" fill="#e33b2e" />
          <path d="M15 15L2 7.500A15 15 0 0 0 14.500 30L21.500 18.700z" fill="#2a9d49" />
          <path d="M15 7.500h13A15 15 0 0 1 14.500 30L21.500 18.700z" fill="#fcc31e" />
          <circle cx="15" cy="15" r="7.300" fill="#fff" /><circle cx="15" cy="15" r="5.700" fill="#3a7cec" />
        </Svg>
      </TaskApp>
      <TaskApp dot>
        <Svg w={26} h={30}>
          <path d="M7 0h12l3 3h2l2 5-1 3 0 7q-1 4-4 6l-8 6-8-6q-3-2-4-6L1 11 0 8l2-5h2z" fill="#fb4217" />
          <path d="M8.500 4.500l4.500 1 4.500-1 5 5-1.500 3 .500 3-4 4 .500 2-5 4-5-4 .500-2-4-4 .500-3-1.500-3z" fill="#fff" />
          <path d="M6 10.500l5 1-1.500 3zM20 10.500l-5 1 1.500 3zM12.400 10h1.200v6l2.400 2-3 1.500L10 18l2.400-2zM10 21l3 1.500L16 21l-3 3z" fill="#fb4217" />
        </Svg>
      </TaskApp>
      <TaskApp dot>
        <Svg w={30} h={28}>
          <path d="M7 0h22v7H7z" fill="#41a5ee" /><path d="M7 7h22v7H7z" fill="#2b7cd3" />
          <path d="M7 14h22v7H7z" fill="#185abd" /><path d="M7 21h22v6.500H7z" fill="#103f91" />
          <path d="M0 6.500h15.500v15H0z" fill="#1a57b8" />
          <text x="2" y="18.300" fontFamily="Open Sans" fontWeight="700" fontSize="12" fill="#fff" textLength="11.500" lengthAdjust="spacingAndGlyphs">W</text>
        </Svg>
      </TaskApp>
      <TaskApp dot>
        <Svg w={27} h={27} className="ml-px">
          <defs>
            <linearGradient id="ph" x1="0" y1="0" x2="1" y2="1">
              <stop offset="0" stopColor="#127fdb" /><stop offset="1" stopColor="#5a55b8" />
            </linearGradient>
          </defs>
          <rect x=".5" y=".5" width="26" height="26" rx="2.500" fill="url(#ph)" />
          <path d="M15 9q1.500.2 2.500 1.200l9 9V24q0 2.500-2.500 2.500H10z" fill="#1b7fd6" />
          <path d="M.7 22L12.500 10q2.500-2 5 0l1.500 1.500L5 26.500H3Q.7 26.500.7 24z" fill="#3fd0f5" />
          <circle cx="20" cy="5.500" r="2.500" fill="#e8f2fc" />
        </Svg>
      </TaskApp>
      <div className="ml-[2px] mt-1 flex h-[50px] w-[50px] shrink-0 flex-col items-center rounded-md border border-[#4b3f33] bg-[#3a3126]">
        <Svg w={30} h={28} className="mt-[10px]">
          <path d="M7 0h11v7H7z" fill="#21a366" /><path d="M18 0h11v7H18z" fill="#33c481" />
          <path d="M7 7h11v7H7z" fill="#107c41" /><path d="M18 7h11v7H18z" fill="#21a366" />
          <path d="M7 14h11v7H7z" fill="#185c37" /><path d="M18 14h11v7H18z" fill="#107c41" />
          <path d="M7 21h22v6.500H7z" fill="#185c37" />
          <path d="M0 6.500h15.500v15H0z" fill="#0f7038" />
          <text x="3.500" y="18.300" fontFamily="Open Sans" fontWeight="700" fontSize="12" fill="#fff">X</text>
        </Svg>
        <span className="mt-[6px] block h-1 w-5 rounded-full bg-[#4cb8f5]" />
      </div>
      <TaskApp dot ml="ml-[3px]">
        <Svg w={23} h={30}>
          <path d="M.5 3h22v22H.5z" fill="#5cc8e2" /><path d="M.5 25.500h22v2H.5z" fill="#f4f4f4" /><path d="M.5 27.500h22V30H.5z" fill="#b2591a" />
          <path d="M3.500 0v3.500M9 0v3.500M14.500 0v3.500M19.500 0v3.500" stroke="#13728f" strokeWidth="2.500" />
          <path d="M4.500 9h14M4.500 14h14M4.500 19h14" stroke="#136f8c" strokeWidth="1.800" />
        </Svg>
      </TaskApp>

      <div className="ml-auto flex h-[58px] items-center">
        <Svg w={13} h={8}><path d="M1 7L6.500 1.500L12 7" stroke="#fff" strokeWidth="1.800" /></Svg>
        <Svg w={18} h={20} className="ml-[24px]">
          <path d="M1 9.500L16.500 1L13 18.500L9.500 12z" stroke="#7fdcf7" strokeWidth="1.400" />
        </Svg>
        <div className="ml-[24px] flex w-[32px] flex-col items-center text-[15px] leading-5">
          <T w={29}>ENG</T>
          <T w={15} className="font-['Open_Sans']">IN</T>
        </div>
        <Svg w={20} h={16} className="ml-[21px]">
          <path d="M1 6Q10-3 19 6M3.800 9Q10 2.500 16.200 9M6.600 12Q10 8.500 13.400 12" stroke="#fff" strokeWidth="1.500" />
          <circle cx="10" cy="13.500" r="1.900" fill="#fff" />
        </Svg>
        <Svg w={20} h={16} className="ml-[10px]">
          <path d="M.8 5.500h3L8.500 1.500v13L3.800 10.500h-3z" stroke="#fff" strokeWidth="1.400" />
          <path d="M11 5.500q2 2.500 0 5" stroke="#fff" strokeWidth="1.400" />
          <path d="M13.500 3q4 5 0 10M16 1q5.500 7 0 14" stroke="#6a6a68" strokeWidth="1.300" />
        </Svg>
        <Svg w={21} h={17} className="ml-[10px]">
          <rect x="1" y="4" width="16" height="11.500" rx="3" stroke="#fff" strokeWidth="1.500" />
          <path d="M7 6h8v7.500H3.500V9z" fill="#fff" /><path d="M18 7q2 0 2 2.700T18 12.500z" fill="#fff" />
          <path d="M4 0L0 6h3L1.500 10L7 4H4L6 0z" fill="#fff" stroke="#23241f" strokeWidth=".6" />
        </Svg>
        <div className="ml-[19px] flex w-[78px] flex-col items-end text-[15px] leading-5">
          <T w={36}>13:44</T>
          <T w={78}>12-04-2025</T>
        </div>
        <Svg w={18} h={19} className="ml-[11px] mr-[26px]">
          <path d="M2 13V8q0-6 6-7l4 1 4 7v4l1 2H.5zM6 16.500h6q-3 3.500-6 0z" fill="#fff" />
          <path d="M12 1h4.500L12.500 5.500H17" stroke="#fff" strokeWidth="1.300" />
          <path d="M6 6.500h4L6.300 11H10.500" stroke="#23241f" strokeWidth="1.300" />
        </Svg>
      </div>
    </div>
  );
}

export default function App() {
  return (
    <div className="flex h-[1080px] w-[1920px] flex-col overflow-hidden bg-[#e6e6e6] font-['Noto_Sans',sans-serif]">
      <TitleBar />
      <div className="bg-[#f3f2f1]">
        <TabRow />
        <Ribbon />
      </div>
      <FormulaBar />
      <div className="flex h-[710px]">
        <Sheet />
        <div className="ml-[3px] mt-[2px] flex w-[19px] flex-col bg-[#dadada]">
          <ScrollBtn d="M0 7h9L4.500 2z" />
          <div className="mt-[68px] h-[56px] border border-[#ababab] bg-white" />
          <div className="mt-auto"><ScrollBtn d="M0 2h9L4.500 7z" /></div>
        </div>
      </div>
      <SheetTabs />
      <StatusBar />
      <Taskbar />
    </div>
  );
}
